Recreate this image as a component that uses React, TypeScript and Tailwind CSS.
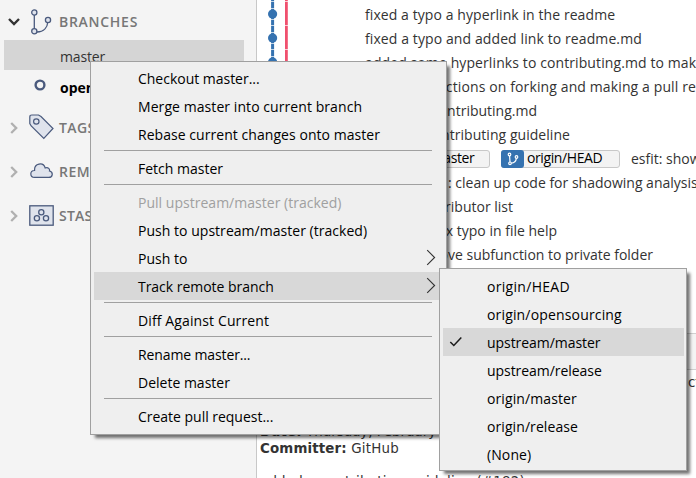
import React from "react";

type Entry = { label: string; track: string; muted?: boolean; arrow?: boolean; active?: boolean; checked?: boolean } | null;

const actions: Entry[] = [
  { label: "Checkout master...", track: "tracking-[-0.02px]" },
  { label: "Merge master into current branch", track: "tracking-[0.07px]" },
  { label: "Rebase current changes onto master", track: "tracking-[0.05px]" },
  null,
  { label: "Fetch master", track: "tracking-[0px]" },
  null,
  { label: "Pull upstream/master (tracked)", track: "tracking-[0.02px]", muted: true },
  { label: "Push to upstream/master (tracked)", track: "tracking-[0.03px]" },
  { label: "Push to", track: "tracking-[0px]", arrow: true },
  { label: "Track remote branch", track: "tracking-[-0.03px]", arrow: true, active: true },
  null,
  { label: "Diff Against Current", track: "tracking-[0.12px]" },
  null,
  { label: "Rename master...", track: "tracking-[-0.12px]" },
  { label: "Delete master", track: "tracking-[0px]" },
  null,
  { label: "Create pull request...", track: "tracking-[-0.02px]" },
];

const remotes: Entry[] = [
  { label: "origin/HEAD", track: "tracking-[0.3px]" },
  { label: "origin/opensourcing", track: "tracking-[0.16px]" },
  { label: "upstream/master", track: "tracking-[-0.05px]", active: true, checked: true },
  { label: "upstream/release", track: "tracking-[-0.05px]" },
  { label: "origin/master", track: "tracking-[0.1px]" },
  { label: "origin/release", track: "tracking-[0.08px]" },
  { label: "(None)", track: "tracking-[0.1px]" },
];

function MenuList({ items }: { items: Entry[] }) {
  return (
    <>
      {items.map((it, i) =>
        it === null ? (
          <div key={i} className="h-1.5 pl-[10px] pr-[11px] pt-[2px]">
            <div className="h-px bg-[#a0a0a0]" />
          </div>
        ) : (
          <div
            key={i}
            className={`flex h-7 items-center pr-[7px] ${it.active ? "bg-[#d8d8d8]" : ""} ${it.muted ? "text-[#a0a0a0]" : "text-black"}`}
          >
            <span className="flex w-11 items-center pb-px pl-[6px]">
              {it.checked && (
                <svg width="14" height="12" viewBox="0 0 14 12" fill="none" stroke="#1a1a1a" strokeWidth="1.5">
                  <path d="M1.3 6 L4.8 9.5 L12.3 1.5" />
                </svg>
              )}
            </span>
            <span className={`grow whitespace-nowrap pt-px ${it.track}`}>{it.label}</span>
            {it.arrow && (
              <svg className="-mt-px" width="10" height="17" viewBox="0 0 10 17" fill="none" stroke="#333" strokeWidth="1.1">
                <path d="M1.2 1.2 L8.6 8.5 L1.2 15.8" />
              </svg>
            )}
          </div>
        )
      )}
    </>
  );
}

function Chevron() {
  return (
    <svg className="ml-[10px] mr-[11px] mt-[2px]" width="8" height="12" viewBox="0 0 8 12" fill="none" stroke="#b0b0b0" strokeWidth="2.3">
      <path d="M1.2 1 L6.2 6 L1.2 11" />
    </svg>
  );
}

function LogRow({ children, width = "" }: { children: React.ReactNode; width?: string }) {
  return <div className={`flex h-6 shrink-0 items-center whitespace-nowrap pb-px ${width}`}>{children}</div>;
}

function Pill({ label, width }: { label: string; width: string }) {
  return (
    <span className={`flex h-[18px] shrink-0 items-center rounded-[3px] border border-[#c8c8c8] bg-[#f3f3f3] text-black ${width}`}>
      <span className="-ml-px flex h-[18px] w-[23px] items-center justify-center rounded-[3px] bg-[#3572b0]">
        <svg width="12" height="14" viewBox="0 0 12 14" fill="none" stroke="white" strokeWidth="1.2">
          <circle cx="2.5" cy="2.5" r="1.3" />
          <circle cx="3" cy="11.3" r="1.3" />
          <circle cx="9.5" cy="5" r="1.3" />
          <path d="M2.6 3.8 L3 10 M4.3 11.2 C7.5 10.8 9 9 9.4 6.3" />
        </svg>
      </span>
      <span className="pb-px pl-[3px] tracking-[-0.4px]">{label}</span>
    </span>
  );
}

export default function App() {
  return (
    <div className="relative flex h-[478px] w-[696px] overflow-hidden bg-white font-['Open_Sans','Noto_Sans',sans-serif] text-[14px] leading-5 text-[#333]">
      <aside className="flex w-[257px] shrink-0 flex-col border-r border-[#c8c8c8] bg-[#f4f4f4] text-[14px] text-[#777]">
        <div className="flex h-10 items-center pt-[3px] font-semibold">
          <svg className="ml-[8px] mr-[10px]" width="12" height="8" viewBox="0 0 12 8" fill="none" stroke="#333" strokeWidth="2.4">
            <path d="M1 1 L6 6 L11 1" />
          </svg>
          <svg className="mr-[7px]" width="22" height="26" viewBox="0 0 22 26" fill="#dfe3ec" stroke="#4a5a7d" strokeWidth="1.3">
            <path d="M4.3 5.5 V20 M7 23 C14 23 17.5 18 18 12" fill="none" />
            <circle cx="4.3" cy="3.5" r="2.6" />
            <circle cx="4.3" cy="22.3" r="2.6" />
            <circle cx="18" cy="11" r="2.6" />
          </svg>
          <span className="tracking-[0.72px]">BRANCHES</span>
        </div>
        <div className="ml-1 flex h-[30px] w-60 items-center bg-[#d5d5d5] pl-14 pt-[3px] tracking-[-0.15px] text-[#333]">master</div>
        <div className="flex h-[35px] items-center pl-[34px] font-bold text-black">
          <svg className="mr-[14px] -mt-[5px]" width="12" height="12" viewBox="0 0 12 12" fill="none" stroke="#4a5a7d" strokeWidth="2.4">
            <circle cx="6" cy="6" r="4.4" />
          </svg>
          <span>opensourcing</span>
        </div>
        <div className="flex h-11 items-center font-semibold">
          <Chevron />
          <svg className="mr-[5px]" width="25" height="26" viewBox="0 0 25 26" fill="#dfe3ec" stroke="#4a5a7d" strokeWidth="1.2">
            <path d="M.8 3 Q.8 1 2.8 1 H9.5 L12 2.5 L24 14.5 L14.8 24.5 L2.2 12 L.8 9.5 Z" />
            <circle cx="7.3" cy="7.5" r="2.7" />
          </svg>
          <span className="pt-[2px] tracking-[0.4px]">TAGS</span>
        </div>
        <div className="flex h-11 items-center font-semibold">
          <Chevron />
          <svg className="ml-px mr-[6px]" width="23" height="16" viewBox="0 0 23 16" fill="#dfe3ec" stroke="#4a5a7d" strokeWidth="1.2">
            <path d="M4.5 14.4 C-.5 14 -.3 7.4 4.6 7.5 C4 .2 13.3 -1.4 15.2 5 C18.3 4 20 6 19.5 8 C23.5 9 23 14.4 18.8 14.4 Z" />
          </svg>
          <span className="pt-[2px] tracking-[0.5px]">REMOTES</span>
        </div>
        <div className="flex h-11 items-center font-semibold">
          <Chevron />
          <svg className="mr-[5px] mt-px" width="25" height="21" viewBox="0 0 25 21" fill="#dfe3ec" stroke="#4a5a7d" strokeWidth="1.3">
            <rect x=".8" y=".8" width="23.4" height="19.4" />
            <circle cx="12.3" cy="7.3" r="2.6" />
            <circle cx="7.9" cy="13.3" r="2.6" />
            <circle cx="17" cy="13.3" r="2.6" />
          </svg>
          <span className="pt-[2px] tracking-[0.2px]">STASHES</span>
        </div>
      </aside>

      <main className="flex min-w-0 grow flex-col">
        <div className="flex h-[333px] shrink-0 overflow-hidden">
          <svg className="mr-[42px] shrink-0" width="66" height="333" viewBox="0 0 66 333">
            <path d="M15.6 0 V333" stroke="#3572b0" strokeWidth="3" />
            <path d="M29.4 0 V333" stroke="#f0506e" strokeWidth="2.8" />
            {[1, 25, 49].map((y) => (
              <path key={y} d={`M13 ${y + 0.5} H32`} stroke="white" strokeOpacity=".7" />
            ))}
            {[14, 38, 62, 86].map((y) => (
              <g key={y}>
                <path d={`M13 ${y - 5.5} H18 M13 ${y + 5.5} H18`} stroke="white" strokeOpacity=".7" />
                <circle cx="15.6" cy={y} r="4.6" fill="#3572b0" />
              </g>
            ))}
          </svg>
          <div className="flex flex-col pt-[3px]">
            <LogRow width="tracking-[0.08px]">fixed a typo a hyperlink in the readme</LogRow>
            <LogRow width="tracking-[0.1px]">fixed a typo and added link to readme.md</LogRow>
            <LogRow width="tracking-[0.1px]">added some hyperlinks to contributing.md to mak</LogRow>
            <LogRow width="pl-[42px] tracking-[0.12px]">instructions on forking and making a pull re</LogRow>
            <LogRow width="w-[172px] justify-end">contributing.md</LogRow>
            <LogRow width="w-[205px] justify-end tracking-[0.05px]">contributing guideline</LogRow>
            <LogRow>
              <Pill label="origin/master" width="w-[125px]" />
              <span className="w-[11px] shrink-0" />
              <Pill label="origin/HEAD" width="w-[119px]" />
              <span className="pl-[11px]">esfit: show</span>
            </LogRow>
            <LogRow width="pl-[83px]">: clean up code for shadowing analysis</LogRow>
            <LogRow width="w-[148px] justify-end">contributor list</LogRow>
            <LogRow width="w-[192px] justify-end">fix typo in file help</LogRow>
            <LogRow width="w-[288px] justify-end">move subfunction to private folder</LogRow>
          </div>
        </div>
        <div className="h-[37px] shrink-0 border-y border-[#d0d0d0] bg-[#f4f4f4]" />
        <div className="flex flex-col whitespace-nowrap pl-[3px] font-['DejaVu_Sans',sans-serif] text-[13.4px] leading-[17px]">
          <div className="flex h-6 items-center pl-[428px]">ct</div>
          <div className="h-[29px]" />
          <div><b className="tracking-[0.15px]">Date:</b> Thursday, February</div>
          <div><b className="tracking-[0.15px]">Committer:</b> <span className="tracking-[0.25px]">GitHub</span></div>
          <div className="pt-4 tracking-[0.2px]">added a contributing guideline (#182)</div>
        </div>
      </main>

      <div className="absolute left-[90px] top-[61px] h-[374px] w-[357px] border border-[#a0a0a0] bg-[#efefef] px-[3px] py-[2px] shadow-[4px_4px_3px_-1px_rgba(0,0,0,0.55)]">
        <MenuList items={actions} />
      </div>
      <div className="absolute left-[439px] top-[268px] h-[203px] w-[248px] border border-[#a0a0a0] bg-[#efefef] pb-[2px] pl-[3px] pr-[2px] pt-[3px] shadow-[4px_4px_3px_-1px_rgba(0,0,0,0.55)]">
        <MenuList items={remotes} />
      </div>
    </div>
  );
}
